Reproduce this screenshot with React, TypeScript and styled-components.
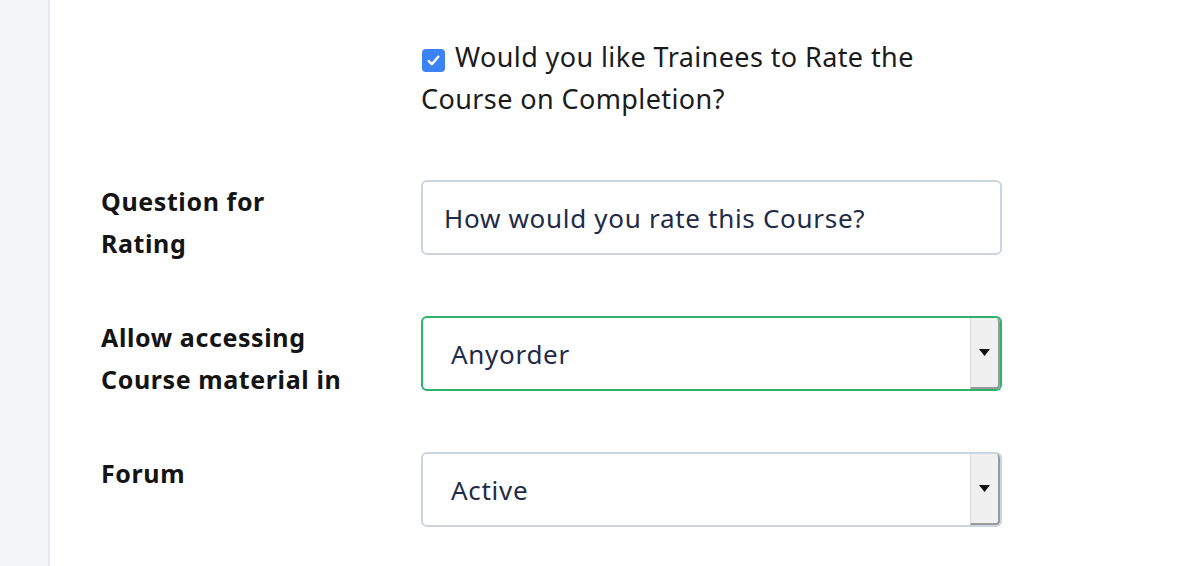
import React from "react";
import styled, { createGlobalStyle } from "styled-components";

const GlobalStyle = createGlobalStyle`
  html, body {
    margin: 0;
    padding: 0;
    background: #ffffff;
    font-family: "Noto Sans", Lato, sans-serif;
  }
`;

const Page = styled.div`
  display: flex;
  min-height: 566px;
`;

const Sidebar = styled.aside`
  width: 48px;
  flex-shrink: 0;
  background: #f3f5f9;
  border-right: 2px solid #e6e8f0;
`;

const Main = styled.main`
  flex: 1;
  padding: 36px 0 0 51px;
`;

const Form = styled.div`
  display: grid;
  grid-template-columns: 320px 581px;
  row-gap: 52px;
`;

const Label = styled.div`
  font-size: 25px;
  font-weight: 700;
  line-height: 42px;
  color: #141414;
  letter-spacing: 0.6px;
`;

const CheckRow = styled.label`
  grid-column: 2;
  font-size: 27px;
  line-height: 42px;
  color: #1b1b1b;
  letter-spacing: 0.4px;
  margin-bottom: 8px;
`;

const Box = styled.span`
  display: inline-flex;
  align-items: center;
  justify-content: center;
  width: 23px;
  height: 23px;
  margin: 0 10px 0 1px;
  border-radius: 4px;
  background: #3b82f6;
  vertical-align: -2px;
`;

const Field = styled.div<{ $focused?: boolean }>`
  display: flex;
  align-items: stretch;
  height: 75px;
  box-sizing: border-box;
  border: ${(p) => (p.$focused ? "2px solid #2db36c" : "2px solid #ccd5df")};
  border-radius: 6px;
  background: #fff;
  font-size: 26px;
  letter-spacing: 0.7px;
  color: #1e2b47;
`;

const Value = styled.span<{ $inset: number }>`
  flex: 1;
  display: flex;
  align-items: center;
  padding-left: ${(p) => p.$inset}px;
`;

// old-style bevelled dropdown button on the right of a select
const ArrowButton = styled.span`
  width: 27px;
  margin: 0 0 0 auto;
  display: flex;
  align-items: center;
  justify-content: center;
  background: #f0f0f0;
  border-left: 1px solid #dcdcdc;
  border-right: 2px solid #9a9a9a;
  border-bottom: 2px solid #9a9a9a;
  border-radius: 0 4px 4px 0;
`;

const Arrow = () => (
  <svg width="11" height="7" viewBox="0 0 11 7">
    <path d="M0 0h11L5.5 7z" fill="#111" />
  </svg>
);

const Check = () => (
  <svg width="17" height="17" viewBox="0 0 16 16">
    <path
      d="M3.5 8.5l3 3L12.5 4.5"
      fill="none"
      stroke="#fff"
      strokeWidth="2.3"
      strokeLinecap="round"
      strokeLinejoin="round"
    />
  </svg>
);

const Select = ({ value, focused }: { value: string; focused?: boolean }) => (
  <Field $focused={focused}>
    <Value $inset={28}>{value}</Value>
    <ArrowButton>
      <Arrow />
    </ArrowButton>
  </Field>
);

export default function App() {
  return (
    <>
      <GlobalStyle />
      <Page>
        <Sidebar />
        <Main>
          <Form>
            <CheckRow>
              <Box>
                <Check />
              </Box>
              Would you like Trainees to Rate the
              <br />
              Course on Completion?
            </CheckRow>

            <Label>
              Question for
              <br />
              Rating
            </Label>
            <Field>
              <Value $inset={21}>How would you rate this Course?</Value>
            </Field>

            <Label>
              Allow accessing
              <br />
              Course material in
            </Label>
            <Select value="Anyorder" focused />

            <Label>Forum</Label>
            <Select value="Active" />
          </Form>
        </Main>
      </Page>
    </>
  );
}
